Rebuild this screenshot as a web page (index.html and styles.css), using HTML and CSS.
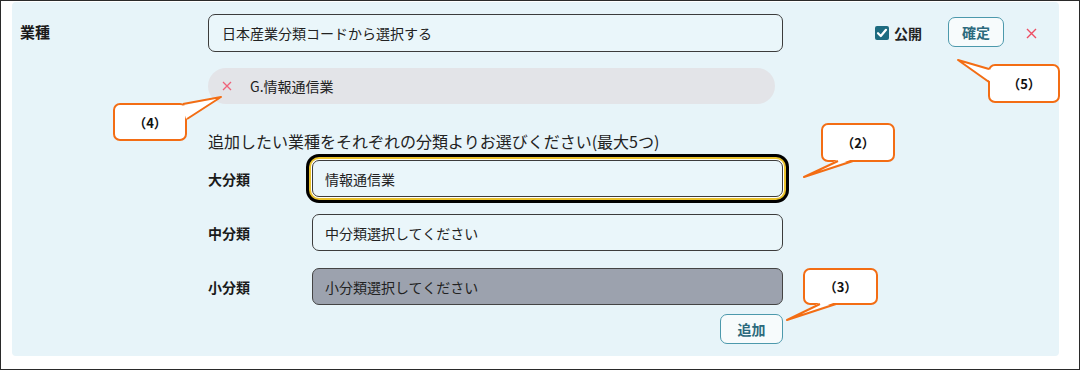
FILE: index.html
```html
<!DOCTYPE html>
<html lang="ja">
<head>
  <meta charset="UTF-8" />
  <meta name="viewport" content="width=device-width, initial-scale=1.0"/>
  <title>業種</title>
  <link rel="stylesheet" href="styles.css">
</head>
<body>
  <div class="frame">
    <div class="panel">
      <div class="field-label">業種</div>
      <div class="field-body">
        <div class="top-row">
          <div class="input input-top">日本産業分類コードから選択する</div>
          <div class="actions">
            <label class="check">
              <span class="check-box">
                <svg width="14" height="14" viewBox="0 0 14 14"><path d="M3 7.2 L5.8 10 L11 3.8" fill="none" stroke="#fff" stroke-width="2.2" stroke-linecap="round" stroke-linejoin="round"/></svg>
              </span>
              公開
            </label>
            <button class="btn btn-ok">確定</button>
            <button class="close">
              <svg width="11" height="11" viewBox="0 0 11 11"><path d="M1 1 L10 10 M10 1 L1 10" stroke="#ee4d63" stroke-width="1.4"/></svg>
            </button>
          </div>
        </div>

        <div class="chip">
          <span class="chip-x">
            <svg width="10" height="10" viewBox="0 0 10 10"><path d="M1 1 L9 9 M9 1 L1 9" stroke="#f0627a" stroke-width="1.3"/></svg>
          </span>
          G.情報通信業
        </div>

        <p class="hint">追加したい業種をそれぞれの分類よりお選びください(最大5つ)</p>

        <div class="form-row">
          <span class="row-label">大分類</span>
          <div class="input input-sel focus">情報通信業</div>
        </div>
        <div class="form-row">
          <span class="row-label">中分類</span>
          <div class="input input-sel">中分類選択してください</div>
        </div>
        <div class="form-row">
          <span class="row-label">小分類</span>
          <div class="input input-sel disabled">小分類選択してください</div>
        </div>

        <div class="add-row">
          <button class="btn btn-add">追加</button>
        </div>
      </div>
    </div>
  </div>

  <!-- numbered callouts laid over the screen -->
  <div class="callout c2">（2）</div>
  <div class="callout c3">（3）</div>
  <div class="callout c4">（4）</div>
  <div class="callout c5">（5）</div>

  <svg class="pointers" width="1081" height="371" viewBox="0 0 1081 371">
    <g fill="#fff" stroke="none">
      <polygon points="181,106 221,97 186,119 184,112"/>
      <polygon points="991,70 958,60 991,82"/>
      <polygon points="839,159 804,177 853,159"/>
      <polygon points="821,302 787,320 836,302"/>
    </g>
    <g fill="none" stroke="#f36d14" stroke-width="2" stroke-linejoin="round">
      <polyline points="183,104 221,97 187,119"/>
      <polyline points="989,69 958,60 989,82"/>
      <polyline points="838,161 804,177 853,161"/>
      <polyline points="820,304 787,320 836,304"/>
    </g>
  </svg>
</body>
</html>
```

FILE: styles.css
```css
body {
  margin: 0;
  position: relative;
  font-family: "Noto Sans CJK JP", "Noto Sans", sans-serif;
  color: #222;
  background: #fff;
}
.frame {
  box-sizing: border-box;
  width: 1080px;
  height: 370px;
  border: 1px solid #2a2a2a;
  padding: 1px 20px 13px 11px;
  display: flex;
}
.panel {
  flex: 1;
  display: flex;
  background: #e7f4f9;
  border-radius: 4px;
  padding: 12px 22px 12px 8px;
}
.field-label {
  width: 188px;
  font-size: 15px;
  font-weight: 700;
  line-height: 20px;
  padding-top: 8px;
  color: #1a1a1a;
}
.field-body {
  flex: 1;
  display: flex;
  flex-direction: column;
}
.top-row {
  display: flex;
  align-items: center;
}
.input {
  box-sizing: border-box;
  display: flex;
  align-items: center;
  border: 1.5px solid #3c3c3c;
  border-radius: 7px;
  background: #eaf6fa;
  font-size: 14px;
  color: #222;
}
.input-top {
  width: 575px;
  height: 38px;
  padding: 0 13px;
}
.actions {
  margin-left: auto;
  display: flex;
  align-items: center;
}
.check {
  display: flex;
  align-items: center;
  gap: 5px;
  font-size: 14px;
  font-weight: 700;
  color: #222;
}
.check-box {
  width: 14px;
  height: 14px;
  border-radius: 2px;
  background: #1d6b80;
  display: flex;
}
.btn {
  box-sizing: border-box;
  height: 30px;
  border: 1.5px solid #4c99ac;
  border-radius: 7px;
  background: #f7fbfc;
  color: #2c6a7d;
  font-family: inherit;
  font-size: 14px;
  font-weight: 700;
  padding: 0;
  cursor: pointer;
}
.btn-ok {
  width: 56px;
  margin-left: 26px;
  margin-top: -3px;
}
.close {
  border: none;
  background: none;
  padding: 0;
  margin-left: 22px;
  display: flex;
  cursor: pointer;
}
.chip {
  box-sizing: border-box;
  width: 567px;
  height: 36px;
  margin-top: 16px;
  border-radius: 18px;
  background: #e3e4e8;
  display: flex;
  align-items: center;
  padding-left: 14px;
  font-size: 14px;
  color: #222;
}
.chip-x {
  display: flex;
  margin-right: 18px;
}
.hint {
  margin: 27px 0 9px;
  font-size: 16px;
  line-height: 20px;
  color: #222;
}
.form-row {
  display: flex;
  align-items: center;
  margin-bottom: 17px;
}
.row-label {
  width: 104px;
  font-size: 14px;
  font-weight: 700;
  color: #1a1a1a;
}
.input-sel {
  width: 471px;
  height: 37px;
  padding: 0 12px;
}
.input-sel.focus {
  box-shadow: 0 0 0 1px #fff, 0 0 0 3px #e9c22b, 0 0 0 6px #000;
}
.input-sel.disabled {
  background: #9ca2ae;
  border-color: #444;
}
.add-row {
  display: flex;
  justify-content: flex-end;
  width: 575px;
  margin-top: -8px;
}
.btn-add {
  width: 63px;
}
.callout {
  position: absolute;
  box-sizing: border-box;
  border: 2px solid #f36d14;
  border-radius: 7px;
  background: #fff;
  display: flex;
  align-items: center;
  justify-content: center;
  font-size: 13px;
  font-weight: 700;
  color: #111;
}
.c2 { left: 821px; top: 123px; width: 74px; height: 39px; }
.c3 { left: 803px; top: 268px; width: 75px; height: 37px; }
.c4 { left: 113px; top: 103px; width: 74px; height: 38px; }
.c5 { left: 988px; top: 64px; width: 72px; height: 39px; }
.pointers {
  position: absolute;
  left: 0;
  top: 0;
  pointer-events: none;
}
```
